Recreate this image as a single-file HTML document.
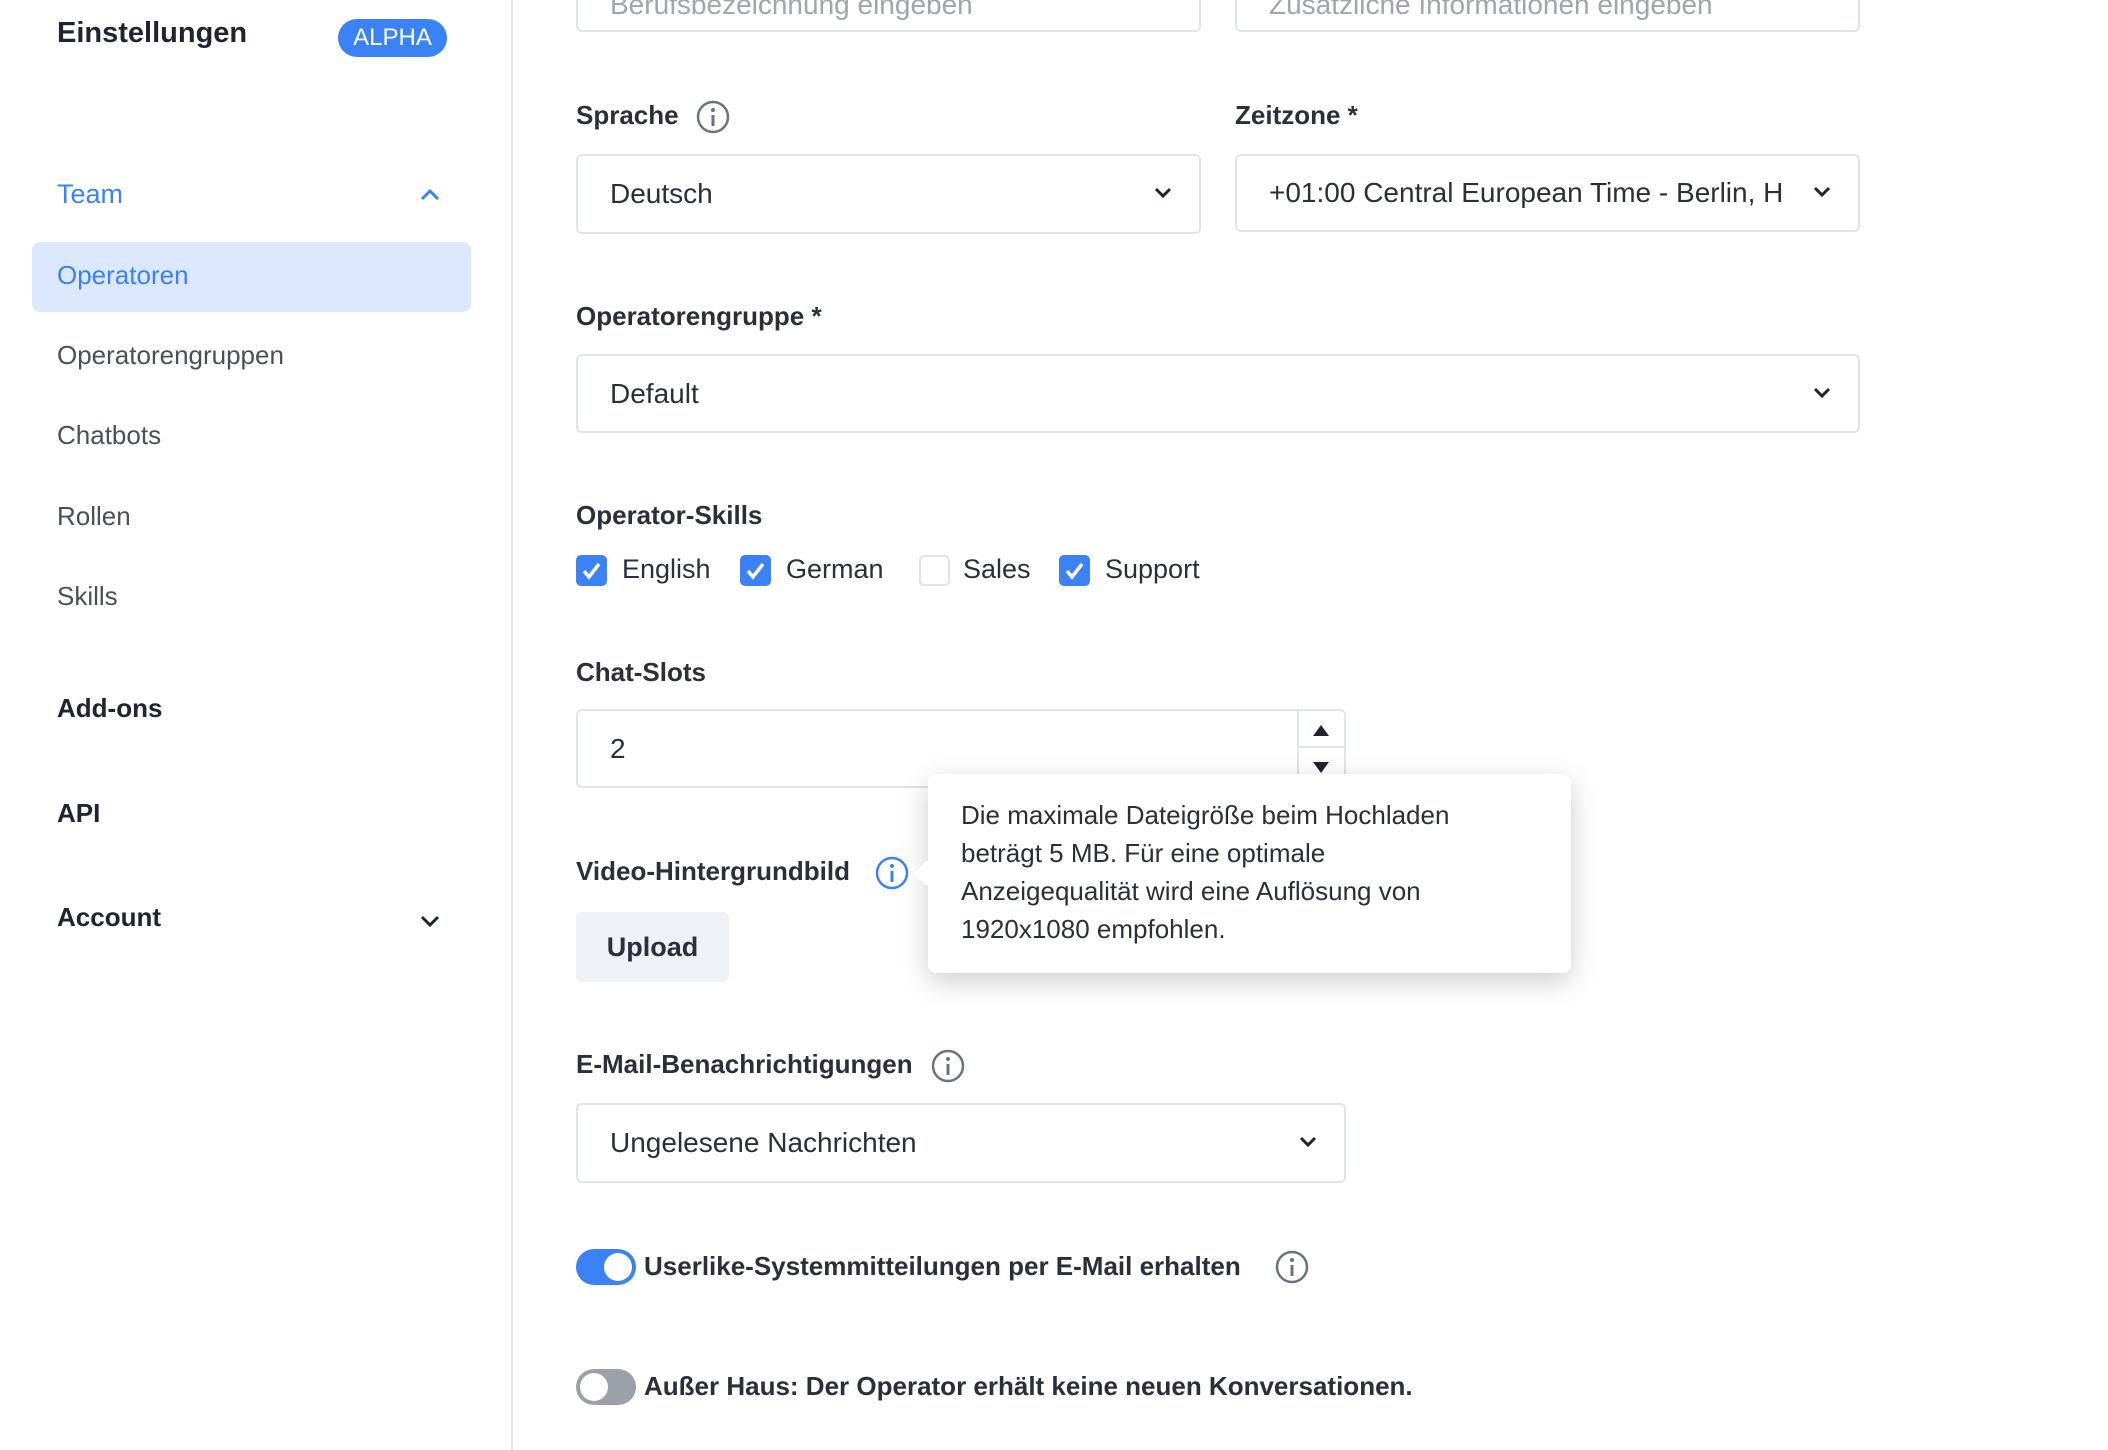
<!DOCTYPE html>
<html><head><meta charset="utf-8"><style>
*{box-sizing:border-box;margin:0;padding:0}
body{width:2108px;height:1450px;overflow:hidden;background:#fff;font-family:"Liberation Sans",sans-serif;color:#1f2430;position:relative}
.a{position:absolute;white-space:nowrap}
.side{position:absolute;left:0;top:0;width:513px;height:1450px;border-right:2px solid #e6e8ec}
.nav{font-size:26px;color:#4a4f5a}
.b{font-weight:bold;color:#1f2430}
.lbl{font-size:26px;font-weight:bold;color:#2a2f3a}
.inp{position:absolute;border:2px solid #e1e4e9;border-radius:6px;background:#fff;font-size:28px;color:#2a2f3a;display:flex;align-items:center;padding-left:32px}
.chev{position:absolute;right:26px;top:50%;margin-top:-8px}
.cb{position:absolute;width:31px;height:31px;border-radius:5px;background:#3b82f6}
.cbl{font-size:27px;color:#2a2f3a}
.info{position:absolute}
#main{position:absolute;left:0;top:0;width:2108px;height:1450px;transform:translate(-4px,-3px)}
</style></head><body>
<div class="side">
<div class="a b" style="left:57px;top:17px;font-size:29px">Einstellungen</div>
<div class="a" style="left:338px;top:19px;width:109px;height:38px;border-radius:19px;background:#3b82f6;color:#fff;font-size:24px;text-align:center;line-height:38px">ALPHA</div>
<div class="a" style="left:57px;top:179px;font-size:27px;color:#3b82f6">Team</div>
<svg class="a" style="left:419px;top:188px" width="22" height="14" viewBox="0 0 22 14"><path d="M3 11 L11 3 L19 11" stroke="#3b82f6" stroke-width="3" fill="none"/></svg>
<div class="a" style="left:32px;top:242px;width:439px;height:70px;border-radius:8px;background:#dbe8fd"></div>
<div class="a nav" style="left:57px;top:260px;color:#3b82f6">Operatoren</div>
<div class="a nav" style="left:57px;top:340px">Operatorengruppen</div>
<div class="a nav" style="left:57px;top:420px">Chatbots</div>
<div class="a nav" style="left:57px;top:501px">Rollen</div>
<div class="a nav" style="left:57px;top:581px">Skills</div>
<div class="a nav b" style="left:57px;top:693px">Add-ons</div>
<div class="a nav b" style="left:57px;top:798px">API</div>
<div class="a nav b" style="left:57px;top:902px">Account</div>
<svg class="a" style="left:419px;top:914px" width="22" height="14" viewBox="0 0 22 14"><path d="M3 3 L11 11 L19 3" stroke="#1f2430" stroke-width="3" fill="none"/></svg>
</div>

<div id="main">
<div class="inp" style="left:580px;top:-20px;width:625px;height:55px;color:#a0a5ae">Berufsbezeichnung eingeben</div>
<div class="inp" style="left:1239px;top:-20px;width:625px;height:55px;color:#a0a5ae">Zusätzliche Informationen eingeben</div>

<div class="a lbl" style="left:580px;top:103px">Sprache</div>
<svg class="info" style="left:700px;top:103px" width="34" height="34" viewBox="0 0 34 34"><circle cx="17" cy="17" r="15" stroke="#6b7280" stroke-width="2.5" fill="none"/><circle cx="17" cy="10" r="2" fill="#6b7280"/><path d="M17 15v11" stroke="#6b7280" stroke-width="3"/></svg>
<div class="a lbl" style="left:1239px;top:103px">Zeitzone *</div>
<div class="inp" style="left:580px;top:157px;width:625px;height:80px">Deutsch<svg class="chev" width="20" height="14" viewBox="0 0 20 14"><path d="M3 3l7 7 7-7" stroke="#1f2430" stroke-width="3" fill="none"/></svg></div>
<div class="inp" style="left:1239px;top:157px;width:625px;height:78px;overflow:hidden">+01:00 Central European Time - Berlin, H<svg class="chev" width="20" height="14" viewBox="0 0 20 14" style="background:#fff"><path d="M3 3l7 7 7-7" stroke="#1f2430" stroke-width="3" fill="none"/></svg></div>

<div class="a lbl" style="left:580px;top:304px">Operatorengruppe *</div>
<div class="inp" style="left:580px;top:357px;width:1284px;height:79px">Default<svg class="chev" width="20" height="14" viewBox="0 0 20 14"><path d="M3 3l7 7 7-7" stroke="#1f2430" stroke-width="3" fill="none"/></svg></div>

<div class="a lbl" style="left:580px;top:503px">Operator-Skills</div>
<div class="cb" style="left:580px;top:558px"><svg width="31" height="31" viewBox="0 0 31 31"><path d="M8 16l5 6 10-13" stroke="#fff" stroke-width="3.5" fill="none"/></svg></div>
<div class="a cbl" style="left:626px;top:557px">English</div>
<div class="cb" style="left:744px;top:558px"><svg width="31" height="31" viewBox="0 0 31 31"><path d="M8 16l5 6 10-13" stroke="#fff" stroke-width="3.5" fill="none"/></svg></div>
<div class="a cbl" style="left:790px;top:557px">German</div>
<div class="cb" style="left:923px;top:558px;background:#fff;border:2px solid #e1e4e9"></div>
<div class="a cbl" style="left:967px;top:557px">Sales</div>
<div class="cb" style="left:1063px;top:558px"><svg width="31" height="31" viewBox="0 0 31 31"><path d="M8 16l5 6 10-13" stroke="#fff" stroke-width="3.5" fill="none"/></svg></div>
<div class="a cbl" style="left:1109px;top:557px">Support</div>

<div class="a lbl" style="left:580px;top:660px">Chat-Slots</div>
<div class="inp" style="left:580px;top:712px;width:770px;height:79px">2</div>
<div class="a" style="left:1301px;top:714px;width:47px;height:75px;border-left:2px solid #e1e4e9"><div style="height:37px;border-bottom:2px solid #e1e4e9"></div></div>
<svg class="a" style="left:1316px;top:726px" width="18" height="14"><path d="M1 13L9 2 17 13Z" fill="#1f2430"/></svg>
<svg class="a" style="left:1316px;top:764px" width="18" height="14"><path d="M1 1L9 12 17 1Z" fill="#1f2430"/></svg>

<div class="a lbl" style="left:580px;top:859px">Video-Hintergrundbild</div>
<svg class="info" style="left:879px;top:859px" width="34" height="34" viewBox="0 0 34 34"><circle cx="17" cy="17" r="15" stroke="#3b82f6" stroke-width="2.5" fill="none"/><circle cx="17" cy="10" r="2" fill="#3b82f6"/><path d="M17 15v11" stroke="#3b82f6" stroke-width="3"/></svg>
<div class="a" style="left:580px;top:915px;width:153px;height:70px;background:#eef1f5;border-radius:6px;font-size:27px;font-weight:bold;text-align:center;line-height:70px;color:#2a2f3a">Upload</div>

<div class="a" style="left:932px;top:777px;width:643px;height:199px;background:#fff;border-radius:8px;box-shadow:0 8px 28px rgba(0,0,0,.2);padding:22px 0 0 33px;font-size:26px;line-height:38px;color:#2a2f3a;white-space:normal">Die maximale Dateigröße beim Hochladen<br>beträgt 5 MB. Für eine optimale<br>Anzeigequalität wird eine Auflösung von<br>1920x1080 empfohlen.</div>
<div class="a" style="left:922px;top:867px;width:18px;height:18px;background:#fff;transform:rotate(45deg)"></div>

<div class="a lbl" style="left:580px;top:1052px">E-Mail-Benachrichtigungen</div>
<svg class="info" style="left:935px;top:1052px" width="34" height="34" viewBox="0 0 34 34"><circle cx="17" cy="17" r="15" stroke="#6b7280" stroke-width="2.5" fill="none"/><circle cx="17" cy="10" r="2" fill="#6b7280"/><path d="M17 15v11" stroke="#6b7280" stroke-width="3"/></svg>
<div class="inp" style="left:580px;top:1106px;width:770px;height:80px">Ungelesene Nachrichten<svg class="chev" width="20" height="14" viewBox="0 0 20 14"><path d="M3 3l7 7 7-7" stroke="#1f2430" stroke-width="3" fill="none"/></svg></div>

<div class="a" style="left:580px;top:1252px;width:60px;height:36px;border-radius:18px;background:#3b82f6"><div style="position:absolute;right:4px;top:4px;width:28px;height:28px;border-radius:50%;background:#fff"></div></div>
<div class="a lbl" style="left:648px;top:1254px;font-size:26px">Userlike-Systemmitteilungen per E-Mail erhalten</div>
<svg class="info" style="left:1279px;top:1253px" width="34" height="34" viewBox="0 0 34 34"><circle cx="17" cy="17" r="15" stroke="#6b7280" stroke-width="2.5" fill="none"/><circle cx="17" cy="10" r="2" fill="#6b7280"/><path d="M17 15v11" stroke="#6b7280" stroke-width="3"/></svg>

<div class="a" style="left:580px;top:1372px;width:60px;height:36px;border-radius:18px;background:#9ca0a8"><div style="position:absolute;left:4px;top:4px;width:28px;height:28px;border-radius:50%;background:#fff"></div></div>
<div class="a lbl" style="left:648px;top:1374px;font-size:26px">Außer Haus: Der Operator erhält keine neuen Konversationen.</div>
</div>
</body></html>
